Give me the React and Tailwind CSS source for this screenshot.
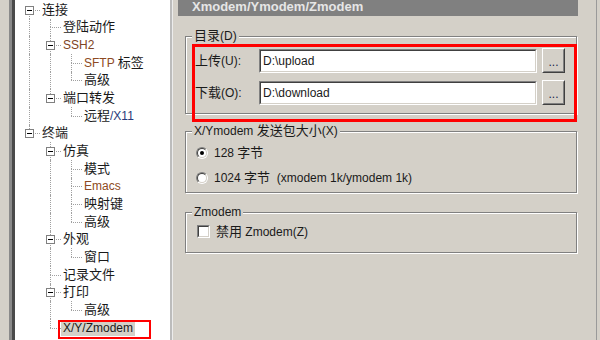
import React from "react";

const CJK = /([\u3000-\u9fff\uff00-\uffef]+)/;

// CJK runs are a touch larger than the latin text in the original dialog
function Txt({ s, lc }) {
  return s.split(CJK).map((p, i) =>
    p === "" ? null : CJK.test(p) ? (
      <span key={i} className="text-[13px]">
        {p}
      </span>
    ) : (
      <span key={i} className={lc}>
        {p}
      </span>
    )
  );
}

const tree = [
  {
    t: "连接",
    c: [
      { t: "登陆动作" },
      {
        t: "SSH2",
        lc: "text-[#7e4424]",
        c: [{ t: "SFTP 标签", lc: "text-[#8e4a22]" }, { t: "高级" }],
      },
      { t: "端口转发", c: [{ t: "远程/X11", lc: "text-[#283a7a]" }] },
    ],
  },
  {
    t: "终端",
    c: [
      {
        t: "仿真",
        c: [
          { t: "模式" },
          { t: "Emacs", lc: "text-[#8e4a22]" },
          { t: "映射键" },
          { t: "高级" },
        ],
      },
      { t: "外观", c: [{ t: "窗口" }] },
      { t: "记录文件" },
      { t: "打印", c: [{ t: "高级" }] },
      { t: "X/Y/Zmodem", sel: true },
    ],
  },
];

function flatten(nodes, level = 0, anc = [], out = []) {
  nodes.forEach((n, i) => {
    const last = i === nodes.length - 1;
    out.push({
      ...n,
      level,
      anc,
      first: i === 0,
      last,
      hasKids: !!n.c,
    });
    if (n.c) flatten(n.c, level + 1, [...anc, last], out);
  });
  return out;
}

const rows = flatten(tree);

function TreeRow({ row }) {
  const { level, anc, first, last, hasKids, t, lc, sel } = row;
  return (
    <div className="flex items-center h-[17.67px]">
      {anc.map((done, l) => (
        <div key={l} className="relative w-[21px] h-full shrink-0">
          {!done && (
            <span className="absolute left-[10px] top-0 bottom-0 border-l border-dotted border-[#a0a0a0]" />
          )}
        </div>
      ))}
      <div className="relative w-[21px] h-full shrink-0">
        {!(level === 0 && first) && (
          <span className="absolute left-[10px] top-0 h-1/2 border-l border-dotted border-[#a0a0a0]" />
        )}
        {!last && (
          <span className="absolute left-[10px] top-1/2 bottom-0 border-l border-dotted border-[#a0a0a0]" />
        )}
        <span className="absolute left-[10px] right-0 top-1/2 border-t border-dotted border-[#a0a0a0]" />
        {hasKids && (
          <span className="absolute left-[6px] top-[4.5px] w-[9px] h-[9px] border border-[#808080] bg-white flex items-center justify-center">
            <span className="w-[5px] h-px bg-black" />
          </span>
        )}
      </div>
      <span
        className={`px-[2px] leading-[16px] whitespace-nowrap ${
          sel ? "bg-[#d4d0c8]" : ""
        }`}
      >
        <Txt s={t} lc={lc} />
      </span>
    </div>
  );
}

function PathRow({ label, value }) {
  return (
    <div className="flex items-center h-[25px]">
      <div className="w-[64px] leading-[16px]">
        <Txt s={label} />
      </div>
      <div className="w-[278px] h-[24px] border border-t-[#808080] border-l-[#808080] border-b-white border-r-white">
        <div className="h-full border border-t-[#404040] border-l-[#404040] border-b-[#d4d0c8] border-r-[#d4d0c8] bg-white pl-[2px] leading-[20px]">
          {value}
        </div>
      </div>
      <button className="ml-[5px] w-[23px] h-[25px] border border-t-white border-l-white border-b-[#404040] border-r-[#404040] bg-[#d4d0c8]">
        <div className="h-full border border-t-[#d4d0c8] border-l-[#d4d0c8] border-b-[#808080] border-r-[#808080] flex items-center justify-center text-[#1a1f4a] leading-[12px] pt-[2px]">
          ...
        </div>
      </button>
    </div>
  );
}

function Radio({ on, children }) {
  return (
    <div className="flex items-center h-[18px] gap-[6px]">
      <span className="w-[12px] h-[12px] rounded-full border border-t-[#808080] border-l-[#808080] border-b-white border-r-white">
        <span className="w-full h-full rounded-full border border-t-[#404040] border-l-[#404040] border-b-[#d4d0c8] border-r-[#d4d0c8] bg-white flex items-center justify-center">
          {on && <span className="w-[4px] h-[4px] rounded-full bg-black" />}
        </span>
      </span>
      <span className="leading-[16px] whitespace-pre">{children}</span>
    </div>
  );
}

export default function App() {
  return (
    <div className="flex w-[600px] h-[340px] overflow-hidden bg-[#d4d0c8] text-[12px] text-[#1a1a1a] font-['Liberation_Sans','Noto_Sans_CJK_SC',sans-serif]">
      <div className="w-[9px] shrink-0" />

      {/* tree */}
      <div className="w-[164px] shrink-0 h-full border-l-[3px] border-r border-l-[#8a8a8a] border-r-[#ececec]">
        <div className="h-full border-l-[3px] border-r-2 border-l-[#4a4a4a] border-r-[#bcbcbc] bg-white">
          <div className="relative h-full pl-[4px] pt-[1px]">
            {rows.map((r, i) => (
              <TreeRow key={i} row={r} />
            ))}
            <div className="absolute left-[43px] top-[320px] w-[93px] h-[19px] border-2 border-[#ff0000] pointer-events-none" />
          </div>
        </div>
      </div>

      {/* settings page */}
      <div className="relative w-[423px] shrink-0 h-full">
        <div className="ml-[5px] w-[400px] h-[16px] bg-[#808080] pl-[14px] text-[13px] font-bold leading-[13px] text-[#e6e6e6]">
          Xmodem/Ymodem/Zmodem
        </div>

        <fieldset className="ml-[12px] mt-[13px] w-[392px] border border-[#808080] shadow-[inset_1px_1px_0_#fff,1px_1px_0_#fff]">
          <legend className="ml-[6px] px-[2px] leading-[14px] bg-[#d4d0c8]">
            <Txt s="目录(D)" />
          </legend>
          <div className="pl-[9px] pt-[5px] pb-[8px] flex flex-col gap-[7px]">
            <PathRow label="上传(U):" value="D:\upload" />
            <PathRow label="下载(O):" value="D:\download" />
          </div>
        </fieldset>

        <fieldset className="ml-[12px] mt-[10px] w-[392px] border border-[#808080] shadow-[inset_1px_1px_0_#fff,1px_1px_0_#fff]">
          <legend className="ml-[6px] px-[2px] leading-[14px] bg-[#d4d0c8]">
            <Txt s="X/Ymodem 发送包大小(X)" />
          </legend>
          <div className="pl-[10px] pt-[6px] pb-[5px] flex flex-col gap-[7px]">
            <Radio on>
              <Txt s="128 字节" />
            </Radio>
            <Radio>
              <Txt s="1024 字节  (xmodem 1k/ymodem 1k)" />
            </Radio>
          </div>
        </fieldset>

        <fieldset className="ml-[12px] mt-[12px] w-[392px] border border-[#808080] shadow-[inset_1px_1px_0_#fff,1px_1px_0_#fff]">
          <legend className="ml-[6px] px-[2px] leading-[14px] bg-[#d4d0c8]">
            Zmodem
          </legend>
          <div className="pl-[11px] pt-[6px] pb-[14px]">
            <div className="flex items-center h-[13px] gap-[6px]">
              <span className="w-[13px] h-[13px] border border-t-[#808080] border-l-[#808080] border-b-white border-r-white">
                <span className="block w-full h-full border border-t-[#404040] border-l-[#404040] border-b-[#d4d0c8] border-r-[#d4d0c8] bg-white" />
              </span>
              <span className="leading-[16px]">
                <Txt s="禁用 Zmodem(Z)" />
              </span>
            </div>
          </div>
        </fieldset>

        <div className="absolute left-[19px] top-[44px] w-[385px] h-[78px] border-[3px] border-[#ff0000] pointer-events-none" />
      </div>

      <div className="w-px shrink-0 h-full bg-[#9a9a9a]" />
    </div>
  );
}
